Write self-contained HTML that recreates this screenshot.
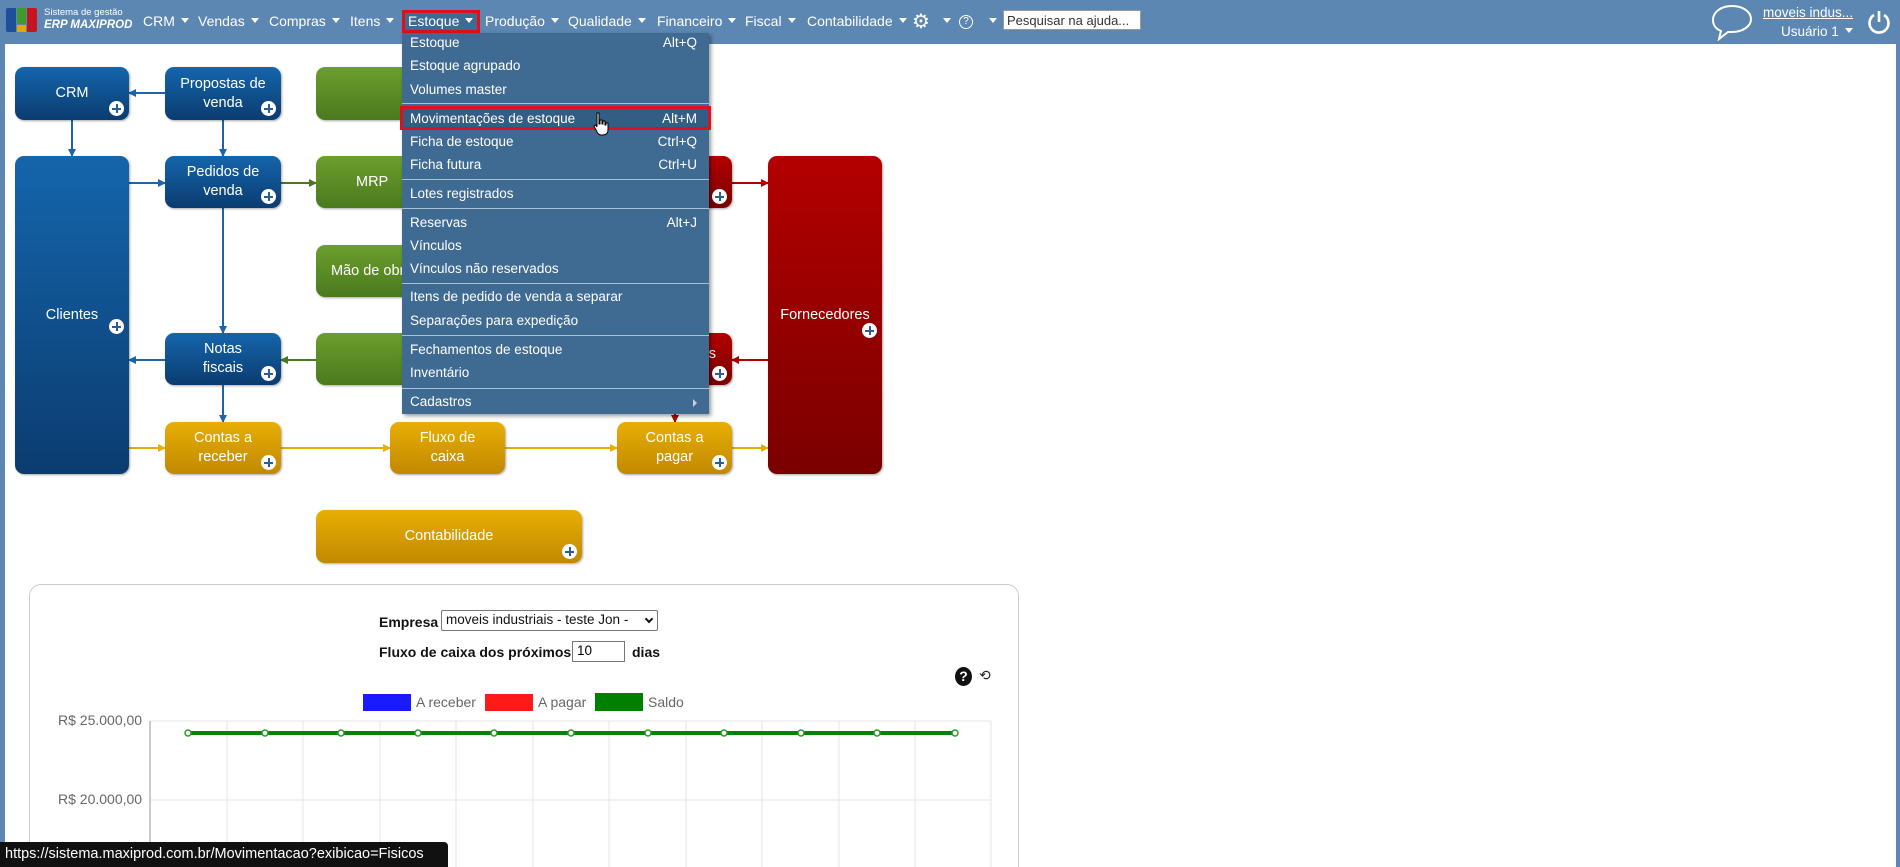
<!DOCTYPE html>
<html><head><meta charset="utf-8"><style>
*{margin:0;padding:0;box-sizing:border-box}
html,body{width:1900px;height:867px;overflow:hidden}
body{background:#fff;font-family:"Liberation Sans",sans-serif}
#wrap{position:relative;width:1900px;height:867px;overflow:hidden}
.a{position:absolute}
#hdr{left:0;top:0;width:1900px;height:44px;background:#5c87b2}
.mi{position:absolute;top:13px;color:#fff;font-size:14px;white-space:nowrap}
.mi:after{content:"";display:inline-block;margin-left:6px;border-left:4.5px solid transparent;border-right:4.5px solid transparent;border-top:5px solid #fff;vertical-align:3px}
.box{position:absolute;border-radius:9px;color:#fff;font-size:14.5px;text-align:center;display:flex;align-items:center;justify-content:center;line-height:19px;box-shadow:1px 1px 2px rgba(0,0,0,.35)}
.b{background:linear-gradient(#1565ac,#0b3c6f)}
.g{background:linear-gradient(#6c9e2e,#4a7a1e)}
.r{background:linear-gradient(#b30000,#7a0000)}
.y{background:linear-gradient(#e8ae05,#c18900)}
.pl{position:absolute;right:5px;bottom:4px;width:15px;height:15px;border-radius:50%;background:#fff}
.pl:before{content:"";position:absolute;left:3px;top:6.5px;width:9px;height:2px;background:#2b5d96}
.pl:after{content:"";position:absolute;left:6.5px;top:3px;width:2px;height:9px;background:#2b5d96}
#dd{left:402px;top:33px;width:307px;height:381px;background:#3f6a92;box-shadow:2px 2px 4px rgba(0,0,0,.4)}
.di{position:absolute;left:8px;color:#fff;font-size:13.5px;white-space:nowrap}
.dk{position:absolute;right:12px;color:#fff;font-size:13.5px}
.sep{position:absolute;left:0;width:307px;height:1px;background:#a9bfd4}
.lb{position:absolute;font-size:14px;color:#666}
</style></head><body><div id="wrap">
<div class="a" style="left:0;top:0;width:5px;height:867px;background:#5c87b2"></div>
<div class="a" style="left:1896px;top:0;width:4px;height:867px;background:#5c87b2"></div>
<div id="hdr" class="a">
 <div class="a" style="left:6px;top:8px;width:10px;height:24px;background:#1f4f9a;border-radius:2px 0 0 2px"></div>
 <div class="a" style="left:17px;top:8px;width:9px;height:16px;background:#3f9a2a"></div>
 <div class="a" style="left:17px;top:25px;width:9px;height:7px;background:#e2a80a"></div>
 <div class="a" style="left:27px;top:8px;width:10px;height:24px;background:#c8141e;border-radius:0 2px 2px 0"></div>
 <div class="a" style="left:44px;top:7px;color:#fff;font-size:9.5px">Sistema de gestão</div>
 <div class="a" style="left:44px;top:19px;color:#fff;font-size:11.5px;font-style:italic;font-weight:bold">ERP MAXIPROD</div>
 <div class="mi" style="left:143px">CRM</div>
 <div class="mi" style="left:198px">Vendas</div>
 <div class="mi" style="left:269px">Compras</div>
 <div class="mi" style="left:350px">Itens</div>
 <div class="a" style="left:402px;top:10px;width:78px;height:23px;border:3px solid #e0101a;background:#3f6a92"></div>
 <div class="mi" style="left:408px">Estoque</div>
 <div class="mi" style="left:485px">Produção</div>
 <div class="mi" style="left:568px">Qualidade</div>
 <div class="mi" style="left:657px">Financeiro</div>
 <div class="mi" style="left:745px">Fiscal</div>
 <div class="mi" style="left:807px">Contabilidade</div>
 <div class="a" style="left:912px;top:12px;color:#fff;font-size:20px;line-height:20px">⚙</div>
 <div class="mi" style="left:937px;top:13px"></div>
 <div class="a" style="left:959px;top:15px;width:14px;height:14px;border:1.5px solid #fff;border-radius:50%;color:#fff;font-size:10px;text-align:center;line-height:11px">?</div>
 <div class="mi" style="left:983px"></div>
 <div class="a" style="left:1003px;top:10px;width:138px;height:20px;background:#fff;border:1px solid #999;font-size:13px;color:#333;padding:2px 3px">Pesquisar na ajuda...</div>
 <svg class="a" style="left:1710px;top:3px" width="44" height="38" viewBox="0 0 44 38"><path d="M22 3C11 3 3 9 3 17c0 5 3 9 8 11l-2 8 9-7c1 0 3 0 4 0 11 0 19-6 19-13S33 3 22 3z" fill="none" stroke="#fff" stroke-width="2"/></svg>
 <div class="a" style="left:1763px;top:5px;color:#fff;font-size:13.5px;text-decoration:underline">moveis indus...</div>
 <div class="mi" style="left:1781px;top:24px;font-size:13.5px">Usuário 1</div>
 <svg class="a" style="left:1866px;top:9px" width="26" height="26" viewBox="0 0 26 26"><path d="M8 6A9.5 9.5 0 1 0 18 6" fill="none" stroke="#fff" stroke-width="2.6"/><path d="M13 2v11" stroke="#fff" stroke-width="2.6"/></svg>
</div>

<svg class="a" style="left:0;top:0" width="900" height="480">
 <defs>
  <marker id="mb" markerWidth="8" markerHeight="8" refX="7" refY="4" orient="auto" markerUnits="userSpaceOnUse"><path d="M0,0L8,4L0,8z" fill="#1f64a8"/></marker>
  <marker id="mg" markerWidth="8" markerHeight="8" refX="7" refY="4" orient="auto" markerUnits="userSpaceOnUse"><path d="M0,0L8,4L0,8z" fill="#4a7a1e"/></marker>
  <marker id="mr" markerWidth="8" markerHeight="8" refX="7" refY="4" orient="auto" markerUnits="userSpaceOnUse"><path d="M0,0L8,4L0,8z" fill="#b00000"/></marker>
  <marker id="my" markerWidth="8" markerHeight="8" refX="7" refY="4" orient="auto" markerUnits="userSpaceOnUse"><path d="M0,0L8,4L0,8z" fill="#e8ae05"/></marker>
 </defs>
 <g stroke-width="2" fill="none">
  <path d="M165 93H129" stroke="#1f64a8" marker-end="url(#mb)"/>
  <path d="M72 120V156" stroke="#1f64a8" marker-end="url(#mb)"/>
  <path d="M223 120V156" stroke="#1f64a8" marker-end="url(#mb)"/>
  <path d="M129 183H165" stroke="#1f64a8" marker-end="url(#mb)"/>
  <path d="M281 183H316" stroke="#4a7a1e" marker-end="url(#mg)"/>
  <path d="M223 208V333" stroke="#1f64a8" marker-end="url(#mb)"/>
  <path d="M165 360H129" stroke="#1f64a8" marker-end="url(#mb)"/>
  <path d="M316 360H281" stroke="#4a7a1e" marker-end="url(#mg)"/>
  <path d="M223 385V422" stroke="#1f64a8" marker-end="url(#mb)"/>
  <path d="M129 448H165" stroke="#e8ae05" marker-end="url(#my)"/>
  <path d="M281 448H390" stroke="#e8ae05" marker-end="url(#my)"/>
  <path d="M505 448H617" stroke="#e8ae05" marker-end="url(#my)"/>
  <path d="M732 448H768" stroke="#e8ae05" marker-end="url(#my)"/>
  <path d="M732 183H768" stroke="#b00000" marker-end="url(#mr)"/>
  <path d="M768 360H732" stroke="#b00000" marker-end="url(#mr)"/>
  <path d="M675 400V422" stroke="#b00000" marker-end="url(#mr)"/>
 </g>
</svg>

<div class="box b" style="left:15px;top:67px;width:114px;height:53px">CRM<span class="pl"></span></div>
<div class="box b" style="left:165px;top:67px;width:116px;height:53px">Propostas de<br>venda<span class="pl"></span></div>
<div class="box g" style="left:316px;top:67px;width:120px;height:53px"></div>
<div class="box b" style="left:15px;top:156px;width:114px;height:318px">Clientes<span class="pl" style="bottom:auto;top:163px"></span></div>
<div class="box b" style="left:165px;top:156px;width:116px;height:52px">Pedidos de<br>venda<span class="pl"></span></div>
<div class="box g" style="left:316px;top:156px;width:120px;height:52px;justify-content:flex-start;padding-left:40px">MRP</div>
<div class="box g" style="left:316px;top:245px;width:120px;height:52px;justify-content:flex-start;padding-left:15px">Mão de obra</div>
<div class="box b" style="left:165px;top:333px;width:116px;height:52px">Notas<br>fiscais<span class="pl"></span></div>
<div class="box g" style="left:316px;top:333px;width:120px;height:52px"></div>
<div class="box r" style="left:617px;top:156px;width:115px;height:52px"><span class="pl"></span></div>
<div class="box r" style="left:617px;top:333px;width:115px;height:52px;justify-content:flex-end;padding-right:16px;padding-bottom:10px">s<span class="pl"></span></div>
<div class="box r" style="left:768px;top:156px;width:114px;height:318px">Fornecedores<span class="pl" style="bottom:auto;top:167px"></span></div>
<div class="box y" style="left:165px;top:422px;width:116px;height:52px">Contas a<br>receber<span class="pl"></span></div>
<div class="box y" style="left:390px;top:422px;width:115px;height:52px">Fluxo de<br>caixa</div>
<div class="box y" style="left:617px;top:422px;width:115px;height:52px">Contas a<br>pagar<span class="pl"></span></div>
<div class="box y" style="left:316px;top:510px;width:266px;height:53px">Contabilidade<span class="pl"></span></div>

<div id="dd" class="a">
 <div class="di" style="top:2px">Estoque</div><div class="dk" style="top:2px">Alt+Q</div>
 <div class="di" style="top:25px">Estoque agrupado</div>
 <div class="di" style="top:49px">Volumes master</div>
 <div class="sep" style="top:70px"></div>
 <div class="a" style="left:-2px;top:73px;width:311px;height:24px;border:3px solid #e0101a;background:#345d85"></div>
 <div class="di" style="top:78px">Movimentações de estoque</div><div class="dk" style="top:78px">Alt+M</div>
 <div class="di" style="top:101px">Ficha de estoque</div><div class="dk" style="top:101px">Ctrl+Q</div>
 <div class="di" style="top:124px">Ficha futura</div><div class="dk" style="top:124px">Ctrl+U</div>
 <div class="sep" style="top:146px"></div>
 <div class="di" style="top:153px">Lotes registrados</div>
 <div class="sep" style="top:175px"></div>
 <div class="di" style="top:182px">Reservas</div><div class="dk" style="top:182px">Alt+J</div>
 <div class="di" style="top:205px">Vínculos</div>
 <div class="di" style="top:228px">Vínculos não reservados</div>
 <div class="sep" style="top:250px"></div>
 <div class="di" style="top:256px">Itens de pedido de venda a separar</div>
 <div class="di" style="top:280px">Separações para expedição</div>
 <div class="sep" style="top:302px"></div>
 <div class="di" style="top:309px">Fechamentos de estoque</div>
 <div class="di" style="top:332px">Inventário</div>
 <div class="sep" style="top:355px"></div>
 <div class="di" style="top:361px">Cadastros</div>
 <div class="a" style="left:291px;top:366px;border-top:4px solid transparent;border-bottom:4px solid transparent;border-left:4px solid #ccd"></div>
 <svg class="a" style="left:191px;top:78px" width="18" height="26" viewBox="0 0 18 26"><path d="M4 2h2v11h1V9h2v4h1v-3h2v4h1v-2h2v7c0 3-2 5-5 5H8c-2 0-3-1-4-3L1 15l2-1 1 2z" fill="#fff" stroke="#000" stroke-width="1"/></svg>
</div>

<div class="a" style="left:29px;top:584px;width:990px;height:283px;border:1px solid #ccc;border-bottom:none;border-radius:12px 12px 0 0"></div>
<div class="a" style="left:379px;top:614px;font-size:14px;font-weight:bold;color:#111">Empresa</div>
<div class="a" style="left:441px;top:610px;width:217px;height:21px;border:1px solid #777;border-radius:2px;font-size:13.5px;padding:1px 4px;color:#111">moveis industriais - teste Jon -</div>
<div class="a" style="left:646px;top:616px;width:6px;height:6px;border-right:2px solid #111;border-bottom:2px solid #111;transform:rotate(45deg)"></div>
<div class="a" style="left:379px;top:644px;font-size:14px;font-weight:bold;color:#111">Fluxo de caixa dos próximos</div>
<div class="a" style="left:572px;top:641px;width:53px;height:21px;border:1px solid #777;font-size:13.5px;padding:1px 4px">10</div>
<div class="a" style="left:632px;top:644px;font-size:14px;font-weight:bold;color:#111">dias</div>
<div class="a" style="left:955px;top:667px;width:17px;height:19px;border-radius:50%;background:#111;color:#fff;font-size:14px;font-weight:bold;text-align:center;line-height:19px">?</div>
<div class="a" style="left:979px;top:667px;font-size:14px;color:#222">⟲</div>

<div class="a" style="left:363px;top:694px;width:48px;height:17px;background:#1a1aff"></div>
<div class="lb" style="left:416px;top:694px">A receber</div>
<div class="a" style="left:485px;top:694px;width:48px;height:17px;background:#ff1a1a"></div>
<div class="lb" style="left:538px;top:694px">A pagar</div>
<div class="a" style="left:595px;top:693px;width:48px;height:18px;background:#008000"></div>
<div class="lb" style="left:648px;top:694px">Saldo</div>
<div class="lb" style="left:58px;top:712px">R$ 25.000,00</div>
<div class="lb" style="left:58px;top:791px">R$ 20.000,00</div>
<svg class="a" style="left:140px;top:715px" width="860" height="152">
 <g stroke="#e6e6e6" stroke-width="1">
  <path d="M10 6H851M10 85H851"/>
  <path d="M87 6V152M163 6V152M240 6V152M316 6V152M393 6V152M469 6V152M546 6V152M622 6V152M699 6V152M775 6V152M851 6V152"/>
 </g>
 <path d="M10 6V152" stroke="#999" stroke-width="1"/>
 <path d="M48 18H815" stroke="#0a800a" stroke-width="4"/>
 <g fill="#fff" stroke="#2a9a2a" stroke-width="1.5">
  <circle cx="48" cy="18" r="3"/><circle cx="125" cy="18" r="3"/><circle cx="201" cy="18" r="3"/><circle cx="278" cy="18" r="3"/><circle cx="354" cy="18" r="3"/><circle cx="431" cy="18" r="3"/><circle cx="508" cy="18" r="3"/><circle cx="584" cy="18" r="3"/><circle cx="661" cy="18" r="3"/><circle cx="737" cy="18" r="3"/><circle cx="815" cy="18" r="3"/>
 </g>
</svg>
<div class="a" style="left:0;top:842px;width:448px;height:25px;background:#111;border-radius:0 4px 0 0;color:#fff;font-size:14.5px;padding:4px 5px;white-space:nowrap">https://sistema.maxiprod.com.br/Movimentacao?exibicao=Fisicos</div>
</div></body></html>
